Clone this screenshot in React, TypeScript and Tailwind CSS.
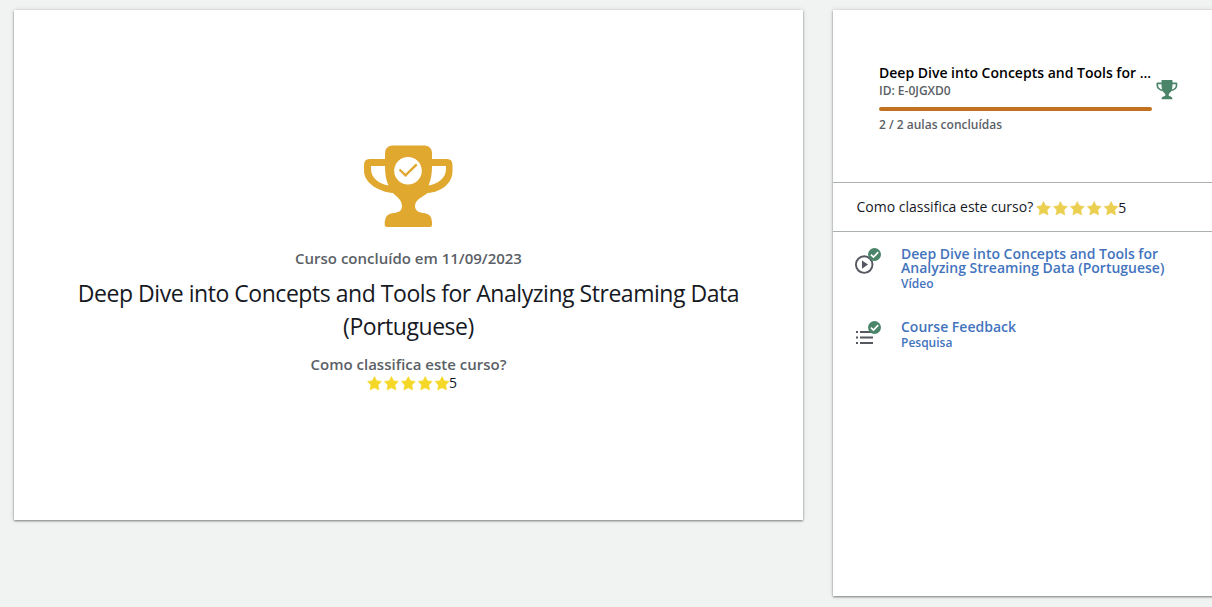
import React from "react";

function Stars({ color }: { color: string }) {
  return (
    <svg width="82" height="16" viewBox="0 0 82 16" fill={color} className="shrink-0 overflow-visible">
      {[0, 1, 2, 3, 4].map((i) => (
        <path
          key={i}
          transform={`translate(${i * 16.9} .4)`}
          stroke={color}
          strokeWidth=".5"
          strokeLinejoin="round"
          d="M7.500 1 9.700 5.400 14.500 6 11.100 9.600 12 14.600 7.500 12.400 3 14.600 3.900 9.600 .5 6 5.300 5.400Z"
        />
      ))}
    </svg>
  );
}

function BigTrophy() {
  return (
    <svg width="90" height="84" viewBox="13 9 90 84" fill="#e0a82e" className="mr-[2px] shrink-0">
      <path
        fillRule="evenodd"
        d="M42 10.500H75Q82 11.500 82 18V24H97Q102.500 24 102.500 30V36C102.500 48 92 57 77.500 58C73 62 65 64.500 65 71C65 76 70 78 74 78Q82 79 82 87V90Q82 92 80 92H37Q34.700 92 34.700 90V87Q35 79 43 78C48 78 52 76 52 71C52 65 47 62 43 58C29 57 14 48 14 36V30Q14 24 19.500 24H35V18Q35 11.500 42 10.500ZM21 31V34C21 43 29 49 38.500 50.500C36 45 35 39 35 31ZM96 31H82C82 39 81 45 78.500 50.500C88 49 96 43 96 34ZM58 22A13.800 13.800 0 1 0 58 49.600A13.800 13.800 0 1 0 58 22Z"
      />
      <path d="M49.500 34.500 55.500 40.300 66.700 29.300" fill="none" stroke="#e0a82e" strokeWidth="2.400" />
    </svg>
  );
}

function SmallTrophy() {
  return (
    <svg width="22" height="20" viewBox="0 0 22 20" fill="#4b8569" className="shrink-0">
      <path
        fillRule="evenodd"
        d="M6 0H16Q16.500 0 16.500 .5V2.500H20.500Q21.300 2.500 21.300 3.500V5.200C21.300 8.500 18.500 10.500 15.500 11C14.500 12.500 13 13.300 12.700 14.500C12.500 16 13.500 16.200 14.800 16.500Q16.500 17 16.500 19.300H5.500Q5.500 17 7.200 16.500C8.500 16.200 9.700 16 9.400 14.500C9 13.300 7.500 12.500 6.500 11C3.500 10.500 .5 8.500 .5 5.200V3.500Q.5 2.500 1.300 2.500H5.500V.5Q5.500 0 6 0ZM2.200 4.200V5.500C2.200 7.500 4 9 6.200 9.500C5.700 8 5.500 6.500 5.500 4.200ZM19.700 4.200H16.500C16.500 6.500 16.300 8 15.800 9.500C18 9 19.700 7.500 19.700 5.500Z"
      />
    </svg>
  );
}

function LessonIcon({ kind }: { kind: "video" | "survey" }) {
  return (
    <svg width="28" height="28" viewBox="0 0 28 28" className="shrink-0">
      {kind === "video" ? (
        <g>
          <circle cx="10.200" cy="17.600" r="8.300" fill="none" stroke="#555761" strokeWidth="1.900" />
          <path d="M8 13.400V21.800L14 17.600Z" fill="#555761" />
        </g>
      ) : (
        <path
          d="M2 11H4V13H2ZM6 11H19V13H6ZM2 16.500H4V18.500H2ZM6 16.500H19V18.500H6ZM2 22H4V24H2ZM6 22H19V24H6Z"
          fill="#555761"
        />
      )}
      <circle cx="20.500" cy="7.500" r="6.500" fill="#4b8569" />
      <path d="M16.900 7.600 19.500 10.100 24.200 5.200" fill="none" stroke="#fff" strokeWidth="1.700" />
    </svg>
  );
}

export default function App() {
  return (
    <div className="flex h-[607px] w-[1212px] items-start gap-[30px] overflow-hidden bg-[#f1f3f3] pt-[10px] pl-[14px] font-['Open_Sans',sans-serif] text-[#16191f]">
      <main className="flex h-[510px] w-[789px] shrink-0 flex-col items-center bg-white pt-[134px] text-center shadow-[0_1px_2px_rgba(0,0,0,0.45),0_0_5px_rgba(0,0,0,0.12)]">
        <BigTrophy />
        <p className="mt-[20px] text-[15px] leading-[20px] font-semibold text-[#5b5f66]">
          Curso concluído em 11/09/2023
        </p>
        <h1 className="mt-[9px] w-[700px] text-[23px] leading-[33px] tracking-[-0.46px]">
          Deep Dive into Concepts and Tools for Analyzing Streaming Data (Portuguese)
        </h1>
        <p className="mt-[11px] text-[15px] leading-[20px] font-semibold text-[#5b5f66]">
          Como classifica este curso?
        </p>
        <div className="flex h-[18px] items-center pl-[7px] text-[14px] leading-[18px]">
          <Stars color="#f5d827" />
          <span>5</span>
        </div>
      </main>
      <aside className="h-[586px] w-[400px] shrink-0 bg-white shadow-[0_1px_2px_rgba(0,0,0,0.45),0_0_5px_rgba(0,0,0,0.12)]">
        <header className="flex h-[172px] gap-[4px] pt-[53px] pl-[46px]">
          <div className="w-[273px]">
            <h2 className="h-[19px] text-[14px] leading-[19px] font-semibold whitespace-nowrap text-black">
              Deep Dive into Concepts and Tools for ...
            </h2>
            <p className="text-[12px] leading-[17px] font-semibold text-[#5b5f66]">ID: E-0JGXD0</p>
            <div className="mt-[8px] h-[4px] rounded-full bg-[#c1711f]" />
            <p className="mt-[5px] text-[12px] leading-[17px] font-semibold text-[#5b5f66]">2 / 2 aulas concluídas</p>
          </div>
          <div className="pt-[17px]">
            <SmallTrophy />
          </div>
        </header>
        <div className="flex h-[50px] items-center gap-[3px] border-y border-[#aab0b1] pl-[23.500px] text-[14px]">
          <span className="pb-[2px]">Como classifica este curso?</span>
          <div className="flex items-center pt-px leading-[18px]">
            <Stars color="#ebcf50" />
            <span>5</span>
          </div>
        </div>
        <ul className="pt-[15px] pl-[21px] text-[#4373bd]">
          <li className="flex h-[73px] gap-[19px]">
            <LessonIcon kind="video" />
            <div className="w-[280px] font-semibold">
              <p className="text-[14px] leading-[14px]">
                Deep Dive into Concepts and Tools for Analyzing Streaming Data (Portuguese)
              </p>
              <p className="mt-px text-[12px] leading-[16px]">Vídeo</p>
            </div>
          </li>
          <li className="flex gap-[19px]">
            <LessonIcon kind="survey" />
            <div className="font-semibold">
              <p className="text-[14px] leading-[14px]">Course Feedback</p>
              <p className="mt-px text-[12px] leading-[16px]">Pesquisa</p>
            </div>
          </li>
        </ul>
      </aside>
    </div>
  );
}
